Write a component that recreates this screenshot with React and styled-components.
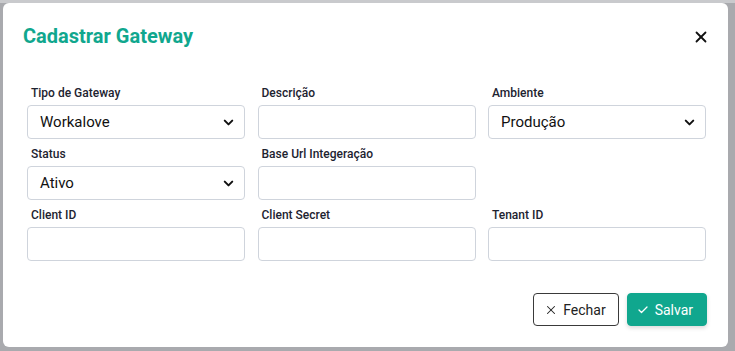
import styled, { createGlobalStyle } from "styled-components";
import { FiChevronDown, FiX, FiCheck } from "react-icons/fi";

const GlobalStyle = createGlobalStyle`
  html, body {
    margin: 0;
    padding: 0;
    background: #a9aaae;
    font-family: Roboto, "Liberation Sans", sans-serif;
  }
`;

const Backdrop = styled.div`
  width: 735px;
  height: 351px;
  padding: 3px 0 0 3px;
  box-sizing: border-box;
  background: linear-gradient(#c9cacd 0, #c9cacd 3px, #a9aaae 3px);
`;

const Modal = styled.div`
  width: 725px;
  height: 344px;
  background: #fff;
  border-radius: 6px;
  box-sizing: border-box;
  padding: 20px 21px 0 24px;
  display: flex;
  flex-direction: column;
`;

const Header = styled.div`
  display: flex;
  align-items: center;
  justify-content: space-between;
  height: 26px;
  margin-left: -4px;
`;

const Title = styled.h2`
  margin: 0;
  font-size: 20px;
  font-weight: 700;
  color: #10a78e;
`;

const Close = styled.button`
  border: 0;
  background: none;
  padding: 0;
  margin-top: 2px;
  margin-right: -3px;
  display: flex;
  color: #111;
  cursor: pointer;
`;

const Grid = styled.div`
  margin-top: 36px;
  display: grid;
  grid-template-columns: repeat(3, 218px);
  column-gap: 12.5px;
  row-gap: 7px;
`;

const Field = styled.div`
  display: flex;
  flex-direction: column;
  gap: 4px;
`;

const Label = styled.label`
  font-size: 12px;
  font-weight: 500;
  line-height: 16px;
  color: #1d2330;
  padding-left: 4px;
`;

const Box = styled.div`
  height: 34px;
  box-sizing: border-box;
  border: 1px solid #cfd4dc;
  border-radius: 4px;
  display: flex;
  align-items: center;
  justify-content: space-between;
  padding: 0 12px 0 12px;
  font-size: 15px;
  color: #111;
`;

const Footer = styled.div`
  margin-top: auto;
  margin-bottom: 21px;
  display: flex;
  justify-content: flex-end;
  gap: 8px;
`;

const Button = styled.button`
  height: 33px;
  box-sizing: border-box;
  border-radius: 4px;
  font-family: inherit;
  font-size: 14px;
  display: flex;
  align-items: center;
  gap: ${(p) => (p.$primary ? "6px" : "5px")};
  padding: ${(p) => (p.$primary ? "0 13px 0 9px" : "0 12px 0 10px")};
  cursor: pointer;
  border: 1px solid ${(p) => (p.$primary ? "#10a78e" : "#3a3a3a")};
  background: ${(p) => (p.$primary ? "#10a78e" : "#fff")};
  color: ${(p) => (p.$primary ? "#fff" : "#222")};
  box-shadow: ${(p) => (p.$primary ? "0 2px 4px rgba(0,0,0,0.15)" : "none")};
`;

const SelectBox = ({ value }) => (
  <Box>
    <span>{value}</span>
    <FiChevronDown size={15} strokeWidth={3.2} style={{ marginRight: -4 }} />
  </Box>
);

const fields = [
  { label: "Tipo de Gateway", select: "Workalove" },
  { label: "Descrição" },
  { label: "Ambiente", select: "Produção" },
  { label: "Status", select: "Ativo" },
  { label: "Base Url Integeração" },
  null,
  { label: "Client ID" },
  { label: "Client Secret" },
  { label: "Tenant ID" },
];

export default function App() {
  return (
    <>
      <GlobalStyle />
      <Backdrop>
        <Modal>
          <Header>
            <Title>Cadastrar Gateway</Title>
            <Close aria-label="Fechar">
              <FiX size={18} strokeWidth={2.4} />
            </Close>
          </Header>
          <Grid>
            {fields.map((f, i) =>
              f ? (
                <Field key={i}>
                  <Label>{f.label}</Label>
                  {f.select ? <SelectBox value={f.select} /> : <Box />}
                </Field>
              ) : (
                <div key={i} />
              )
            )}
          </Grid>
          <Footer>
            <Button>
              <FiX size={14} strokeWidth={1.8} /> Fechar
            </Button>
            <Button $primary>
              <FiCheck size={12} strokeWidth={2.6} /> Salvar
            </Button>
          </Footer>
        </Modal>
      </Backdrop>
    </>
  );
}
